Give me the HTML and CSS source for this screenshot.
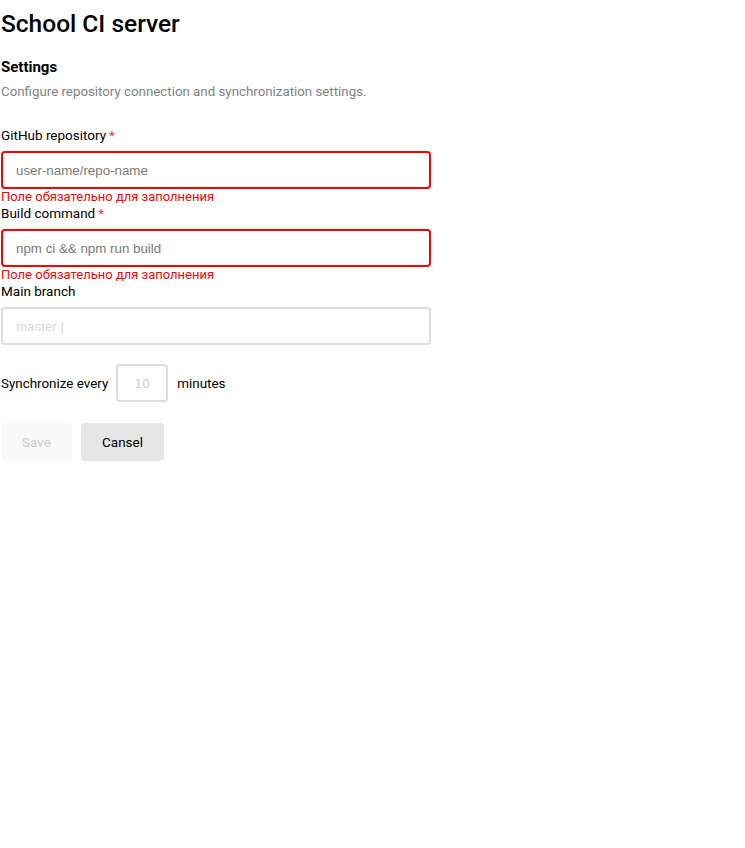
FILE: index.html
```html
<!DOCTYPE html>
<html>
<head>
<meta charset="utf-8">
<link rel="stylesheet" href="styles.css">
</head>
<body>
<div class="page">
  <h1 class="title">School CI server</h1>
  <h2 class="section">Settings</h2>
  <p class="desc">Configure repository connection and synchronization settings.</p>
  <form class="form">
    <div class="field">
      <label class="label">GitHub repository<span class="req">*</span></label>
      <input class="input input-error" placeholder="user-name/repo-name">
      <div class="error">Поле обязательно для заполнения</div>
    </div>
    <div class="field">
      <label class="label">Build command<span class="req">*</span></label>
      <input class="input input-error" placeholder="npm ci &amp;&amp; npm run build">
      <div class="error">Поле обязательно для заполнения</div>
    </div>
    <div class="field">
      <label class="label">Main branch</label>
      <input class="input input-light" placeholder="master |">
    </div>
    <div class="sync">
      <span class="sync-text">Synchronize every</span>
      <input class="input sync-input" placeholder="10">
      <span class="sync-text">minutes</span>
    </div>
    <div class="buttons">
      <button type="button" class="btn btn-save">Save</button>
      <button type="button" class="btn btn-cancel">Cansel</button>
    </div>
  </form>
</div>
</body>
</html>
```
FILE: styles.css
```css
* { box-sizing: border-box; }
body {
  margin: 0;
  font-family: Roboto, "Liberation Sans", sans-serif;
  color: #000;
  background: #fff;
}
.page {
  padding: 8px 0 0 1px;
}
.title {
  margin: 0;
  font-size: 24.5px;
  line-height: 32px;
  font-weight: 500;
}
.section {
  margin: 18px 0 0;
  font-size: 15px;
  line-height: 18px;
  font-weight: 700;
}
.desc {
  margin: 7px 0 0;
  font-size: 13.3px;
  line-height: 18px;
  color: #7f8285;
}
.form {
  margin-top: 26px;
  width: 430px;
}
.label {
  display: block;
  font-size: 13.5px;
  line-height: 16px;
  margin-bottom: 8px;
}
.req {
  color: #ff3333;
  margin-left: 3px;
}
.input {
  display: block;
  width: 430px;
  height: 38px;
  border: 2px solid #dddddd;
  border-radius: 4px;
  padding: 0 13px;
  font-family: "Liberation Sans", Arial, sans-serif;
  font-size: 13.333px;
  outline: none;
  background: #fff;
}
.input::placeholder { color: #7a7a7a; }
.input-error { border-color: #ff0000; }
.input-light::placeholder { color: #d9d9d9; }
.error {
  font-size: 13px;
  line-height: 16px;
  color: #ff0000;
}
.sync {
  margin-top: 19px;
  display: flex;
  align-items: center;
}
.sync-text {
  font-size: 13.4px;
}
.sync-input {
  width: 52px;
  margin: 0 9px 0 8px;
  text-align: center;
  padding: 0;
}
.sync-input::placeholder { color: #cccccc; }
.buttons {
  margin-top: 21px;
  display: flex;
  gap: 9px;
}
.btn {
  height: 38px;
  border: none;
  border-radius: 4px;
  font-family: Roboto, "Liberation Sans", sans-serif;
  font-size: 13.5px;
  padding: 0;
}
.btn-save {
  width: 71px;
  background: #f9f9f9;
  color: #cccccc;
}
.btn-cancel {
  width: 83px;
  background: #e6e6e6;
  color: #000;
}
```
